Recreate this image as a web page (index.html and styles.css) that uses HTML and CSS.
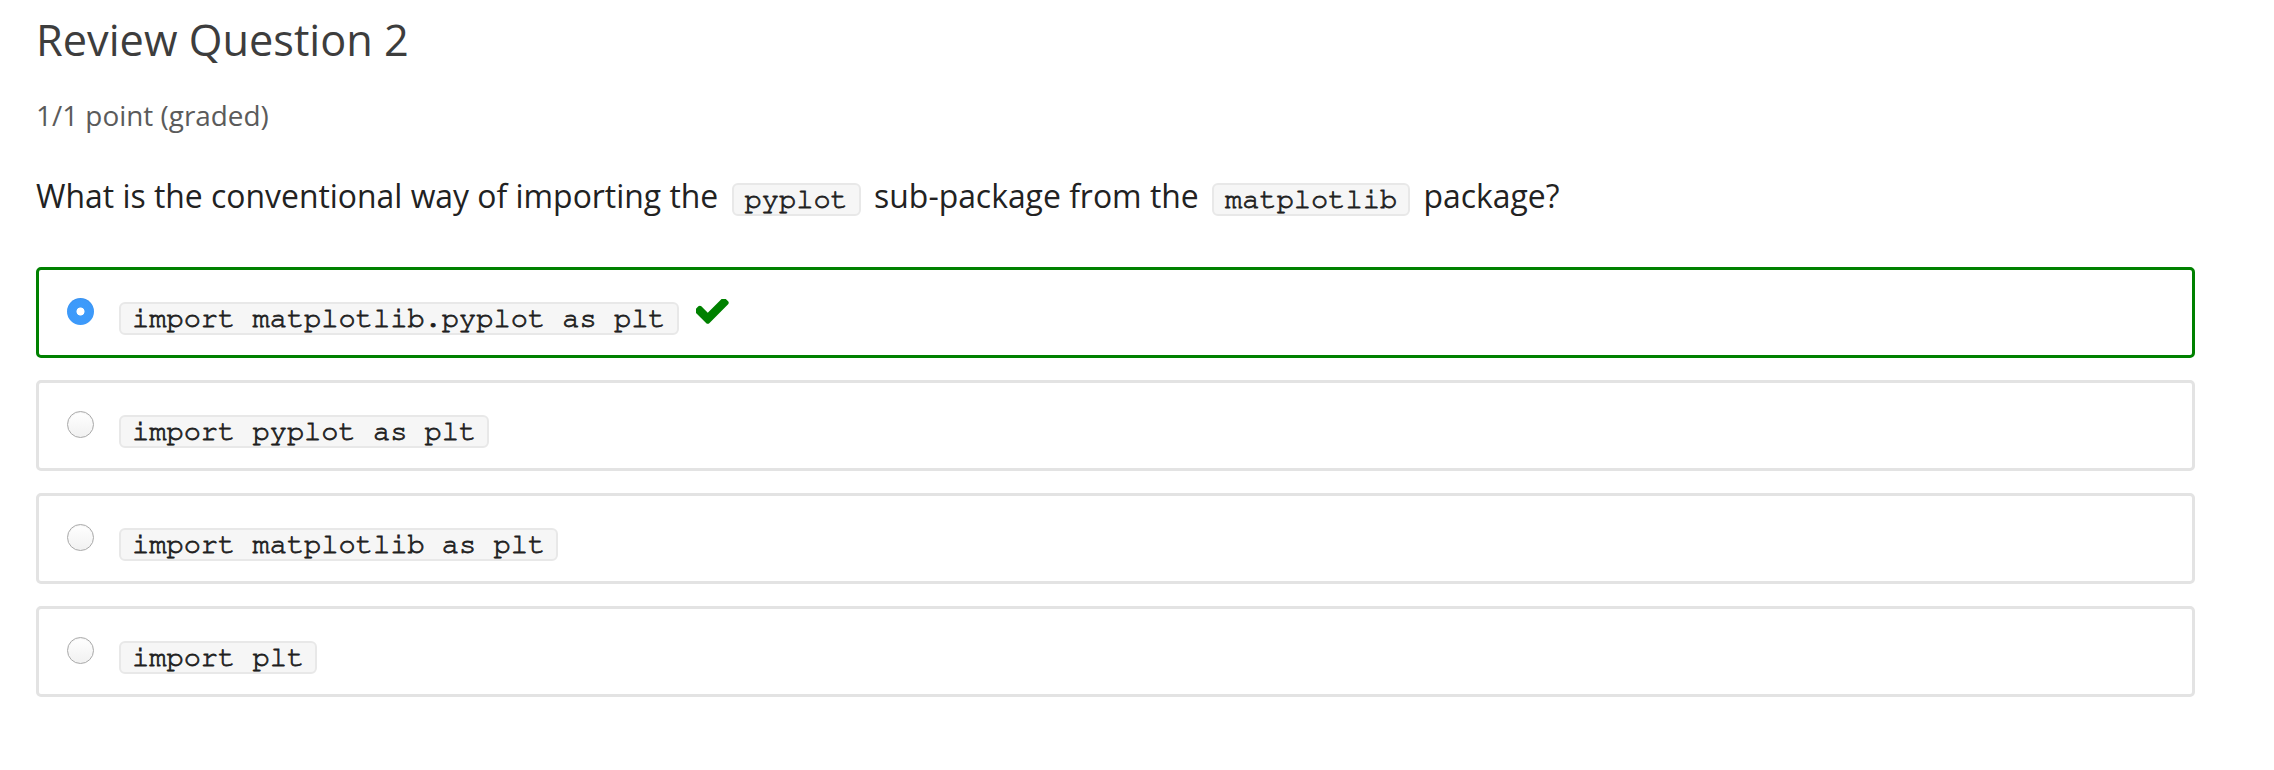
FILE: index.html
```html
<!DOCTYPE html>
<html lang="en">
<head>
<meta charset="utf-8">
<title>Review Question 2</title>
<link rel="stylesheet" href="styles.css">
</head>
<body>
<div class="problem">
  <h2 class="problem-title">Review Question 2</h2>
  <div class="problem-progress">1/1 point (graded)</div>
  <p class="question">What is the conventional way of importing the <code>pyplot</code> sub-package from the <code>matplotlib</code> package?</p>
  <div class="choices">
    <label class="choice choice-correct">
      <input class="radio" type="radio" name="q2" checked>
      <code class="choice-code">import matplotlib.pyplot as plt</code>
      <svg class="check" viewBox="180 390 1500 1140" width="33" height="25" aria-hidden="true"><path d="M1671 566q0 40-28 68l-724 724-136 136q-28 28-68 28t-68-28l-136-136-362-362q-28-28-28-68t28-68l136-136q28-28 68-28t68 28l294 295 656-657q28-28 68-28t68 28l136 136q28 28 28 68z"/></svg>
    </label>
    <label class="choice">
      <input class="radio" type="radio" name="q2">
      <code class="choice-code">import pyplot as plt</code>
    </label>
    <label class="choice">
      <input class="radio" type="radio" name="q2">
      <code class="choice-code">import matplotlib as plt</code>
    </label>
    <label class="choice">
      <input class="radio" type="radio" name="q2">
      <code class="choice-code">import plt</code>
    </label>
  </div>
</div>
</body>
</html>
```
FILE: styles.css
```css
html, body {
  margin: 0;
  padding: 0;
  background: #ffffff;
}

body {
  font-family: "Open Sans", "Liberation Sans", sans-serif;
  color: #222222;
}

.problem {
  padding: 14px 0 0 36px;
  width: 2159px;
}

.problem-title {
  margin: 0;
  font-size: 43.3px;
  line-height: 51.6px;
  font-weight: 400;
  color: #3d3d3d;
}

.problem-progress {
  margin-top: 30px;
  font-size: 27.9px;
  line-height: 38.5px;
  color: #5b5b5b;
}

.question {
  margin: 38px 0 0;
  font-size: 31.9px;
  line-height: 48px;
  color: #222222;
}

code {
  display: inline-block;
  font-family: "Nimbus Mono PS", "Nimbus Mono L", "FreeMono", "Courier 10 Pitch", "Liberation Mono", "Courier New", monospace;
  font-size: 28.7px;
  line-height: 29px;
  padding: 0 11px;
  background: #f6f6f6;
  border: 2px solid #e8e8e8;
  border-radius: 6px;
  color: #1f1f1f;
  -webkit-text-stroke: 0.8px #1f1f1f;
}

.question code {
  margin: 0 5px;
}

.choices {
  margin-top: 47px;
  display: flex;
  flex-direction: column;
  gap: 22px;
}

.choice {
  display: flex;
  align-items: flex-start;
  padding: 28px 28px 20px;
  border: 3px solid #e3e3e3;
  border-radius: 5px;
}

.choice-correct {
  border-color: #008100;
}

.radio {
  appearance: none;
  -webkit-appearance: none;
  margin: 0;
  width: 27px;
  height: 27px;
  border-radius: 50%;
  border: 1.5px solid #a9a9a9;
  background: linear-gradient(#ffffff, #f1f1f1);
  box-shadow: inset 0 1px 1px rgba(0,0,0,0.05);
  flex: none;
}

.radio:checked {
  border: none;
  background: radial-gradient(circle, #ffffff 0, #ffffff 3.6px, #3d9bfb 4.4px, #3c98f9 100%);
}

.choice-code {
  margin: 4px 0 0 25px;
}

.check {
  margin: 1px 0 0 17px;
  fill: #008100;
  flex: none;
}
```
